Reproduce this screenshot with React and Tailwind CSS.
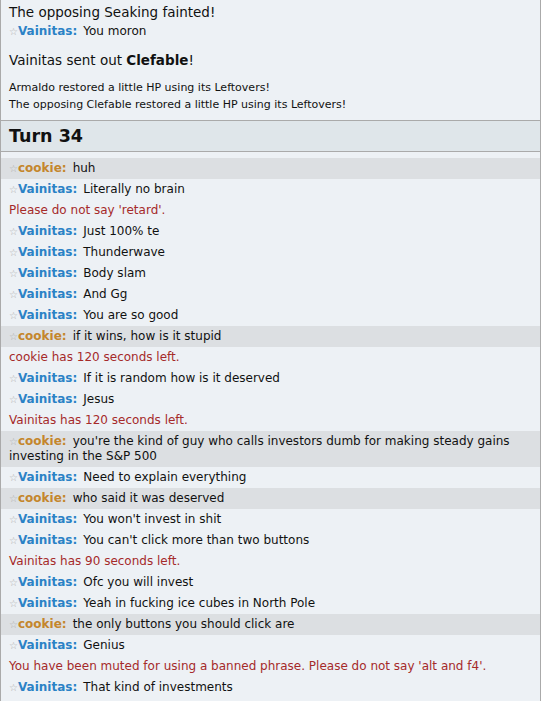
import React from "react";

const COLORS = {
  Vainitas: "text-[#2b82c6]",
  cookie: "text-[#c4862c]",
};

// chat line: user + message, cookie lines get the highlight band
const Chat = ({ user, msg }) => {
  const hl = user === "cookie";
  return (
    <div className={`pl-2 pr-2 py-[3px] text-[12px] leading-[15px] text-[#111] ${hl ? "bg-[#dcdfe2]" : ""}`}>
      <span className="text-[10px] text-[#b0b0b0]">☆</span>
      <strong className={COLORS[user]}>{user}:</strong>
      <span className="ml-[6px]">{msg}</span>
    </div>
  );
};

const Notice = ({ children }) => (
  <div className="pl-2 py-[3px] text-[12px] leading-[15px] text-[#a52a2a]">{children}</div>
);

export default function App() {
  const log = [
    ["cookie", "huh"],
    ["Vainitas", "Literally no brain"],
    ["!", "Please do not say 'retard'."],
    ["Vainitas", "Just 100% te"],
    ["Vainitas", "Thunderwave"],
    ["Vainitas", "Body slam"],
    ["Vainitas", "And Gg"],
    ["Vainitas", "You are so good"],
    ["cookie", "if it wins, how is it stupid"],
    ["!", "cookie has 120 seconds left."],
    ["Vainitas", "If it is random how is it deserved"],
    ["Vainitas", "Jesus"],
    ["!", "Vainitas has 120 seconds left."],
    ["cookie", "you're the kind of guy who calls investors dumb for making steady gains investing in the S&P 500"],
    ["Vainitas", "Need to explain everything"],
    ["cookie", "who said it was deserved"],
    ["Vainitas", "You won't invest in shit"],
    ["Vainitas", "You can't click more than two buttons"],
    ["!", "Vainitas has 90 seconds left."],
    ["Vainitas", "Ofc you will invest"],
    ["Vainitas", "Yeah in fucking ice cubes in North Pole"],
    ["cookie", "the only buttons you should click are"],
    ["Vainitas", "Genius"],
    ["!", "You have been muted for using a banned phrase. Please do not say 'alt and f4'."],
    ["Vainitas", "That kind of investments"],
  ];

  return (
    <div className="h-[701px] w-[541px] overflow-hidden border-x border-[#aaa] bg-[#edf1f5] font-['DejaVu_Sans',sans-serif] text-[#111]">
      <div className="pl-2 pt-[4px] text-[13.5px] leading-[17px]">The opposing Seaking fainted!</div>
      <Chat user="Vainitas" msg="You moron" />
      <div className="pl-2 mt-[10px] text-[13.5px] leading-[17px]">
        Vainitas sent out <strong>Clefable</strong>!
      </div>
      <div className="pl-2 mt-[10px] text-[11px] leading-[17px]">
        <div>Armaldo restored a little HP using its Leftovers!</div>
        <div>The opposing Clefable restored a little HP using its Leftovers!</div>
      </div>

      {/* Turn header */}
      <h2 className="mt-[7px] mb-[6px] border-y border-[#aaa] bg-[#dfe6ea] pl-2 text-[17.5px] font-bold leading-[30px]">
        Turn 34
      </h2>

      {log.map(([user, msg], i) =>
        user === "!" ? <Notice key={i}>{msg}</Notice> : <Chat key={i} user={user} msg={msg} />
      )}
    </div>
  );
}
